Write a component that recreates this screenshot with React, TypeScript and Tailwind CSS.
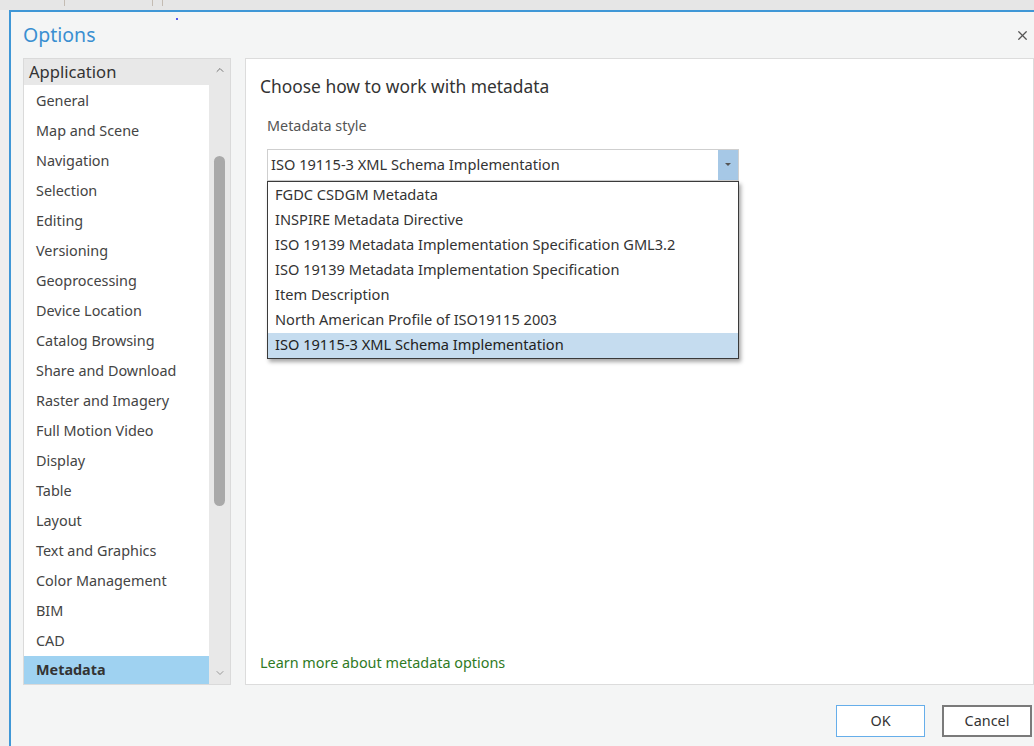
import { ChevronDown, ChevronUp, X } from "lucide-react"

const sections = [
  "General",
  "Map and Scene",
  "Navigation",
  "Selection",
  "Editing",
  "Versioning",
  "Geoprocessing",
  "Device Location",
  "Catalog Browsing",
  "Share and Download",
  "Raster and Imagery",
  "Full Motion Video",
  "Display",
  "Table",
  "Layout",
  "Text and Graphics",
  "Color Management",
  "BIM",
  "CAD",
  "Metadata",
]

const styles = [
  "FGDC CSDGM Metadata",
  "INSPIRE Metadata Directive",
  "ISO 19139 Metadata Implementation Specification GML3.2",
  "ISO 19139 Metadata Implementation Specification",
  "Item Description",
  "North American Profile of ISO19115 2003",
  "ISO 19115-3 XML Schema Implementation",
]

const selectedStyle = "ISO 19115-3 XML Schema Implementation"
const selectedSection = "Metadata"

function SectionList() {
  return (
    <div className="flex h-[627px] w-[208px] border border-[#dadada] bg-[#e8e8e8]">
      <div className="flex w-[185px] flex-col">
        {/* Group header */}
        <div className="flex h-[26px] items-center pl-[5px] text-[16.6px] text-[#333]">
          Application
        </div>
        <div className="flex flex-1 flex-col bg-white pt-[1px]">
          {sections.map((s) => (
            <div
              key={s}
              className={
                s === selectedSection
                  ? "flex h-[30px] flex-1 items-center bg-[#9fd2f1] pl-[12px] text-[14.4px] font-bold text-[#333]"
                  : "flex h-[30px] items-center pl-[12px] text-[14.4px] text-[#444]"
              }
            >
              {s}
            </div>
          ))}
        </div>
      </div>
      {/* Scrollbar */}
      <div className="flex flex-1 flex-col items-center">
        <ChevronUp className="mt-[5px] h-[12px] w-[12px] text-[#777]" strokeWidth={2} />
        <div className="mt-[80px] h-[350px] w-[11px] rounded-full bg-[#a9a9a9]" />
        <div className="flex-1" />
        <ChevronDown className="mb-[5px] h-[12px] w-[12px] text-[#999]" strokeWidth={2} />
      </div>
    </div>
  )
}

function StyleDropdown() {
  return (
    <div className="relative w-[472px]">
      <div className="flex h-[32px] border border-[#cfcfcf] bg-white">
        <div className="flex flex-1 items-center pl-[3px] text-[14.6px] text-[#333]">
          {selectedStyle}
        </div>
        <div className="flex w-[20px] items-center justify-center bg-[#a6c8e6]">
          <div className="h-0 w-0 border-x-[3px] border-t-[3px] border-x-transparent border-t-[#555]" />
        </div>
      </div>
      {/* Open list */}
      <div className="absolute left-0 top-[32px] z-10 w-[472px] border border-[#3a3a3a] bg-white pt-[1px] shadow-[2px_3px_4px_rgba(0,0,0,0.35)]">
        {styles.map((s) => (
          <div
            key={s}
            className={
              s === selectedStyle
                ? "flex h-[25px] items-center bg-[#c5dcef] pl-[7px] text-[14.6px] text-[#222]"
                : "flex h-[25px] items-center pl-[7px] text-[14.6px] text-[#333]"
            }
          >
            {s}
          </div>
        ))}
      </div>
    </div>
  )
}

export default function App() {
  return (
    <div
      className="relative h-[746px] w-[1034px] overflow-hidden bg-[#eeeeee]"
      style={{ fontFamily: '"Noto Sans", "Open Sans", sans-serif' }}
    >
      {/* Window behind the dialog */}
      <div className="h-[10px] bg-[#e6e6e6]">
        <div className="absolute left-[64px] top-0 h-[6px] w-[1px] bg-[#c4bcb3]" />
        <div className="absolute left-[152px] top-0 h-[6px] w-[1px] bg-[#c4bcb3]" />
        <div className="absolute left-[162px] top-0 h-[6px] w-[1px] bg-[#c4bcb3]" />
      </div>
      <div className="absolute left-[176px] top-[18px] h-[2px] w-[2px] rounded-full bg-[#2222ee]" />

      {/* Dialog */}
      <div className="ml-[9px] flex h-[736px] flex-col border-l-2 border-t-2 border-[#3f97d6] bg-[#f4f5f5]">
        <div className="flex h-[46px] items-center justify-between pl-[12px] pr-[4px]">
          <span className="text-[19.5px] text-[#3a8fd1]">Options</span>
          <X className="h-[15px] w-[15px] text-[#555]" strokeWidth={2} />
        </div>

        <div className="flex gap-[14px] pl-[12px]">
          <SectionList />

          <div className="flex h-[627px] flex-1 flex-col border border-[#dcdcdc] bg-white pl-[14px]">
            <div className="mt-[14px] text-[17.4px] text-[#333]">Choose how to work with metadata</div>
            <div className="mt-[16px] pl-[7px] text-[14.4px] text-[#555]">Metadata style</div>
            <div className="mt-[12px] pl-[7px]">
              <StyleDropdown />
            </div>
            <div className="flex-1" />
            <div className="mb-[10px] text-[14.4px] text-[#2f7a1f]">Learn more about metadata options</div>
          </div>
        </div>

        <div className="flex justify-end gap-[17px] pr-[2px] pt-[20px]">
          <button className="h-[32px] w-[89px] border border-[#66aeea] bg-white text-[14.4px] text-[#333]">
            OK
          </button>
          <button className="h-[32px] w-[90px] border-2 border-[#7a7a7a] bg-white text-[14.4px] text-[#333]">
            Cancel
          </button>
        </div>
      </div>
    </div>
  )
}
